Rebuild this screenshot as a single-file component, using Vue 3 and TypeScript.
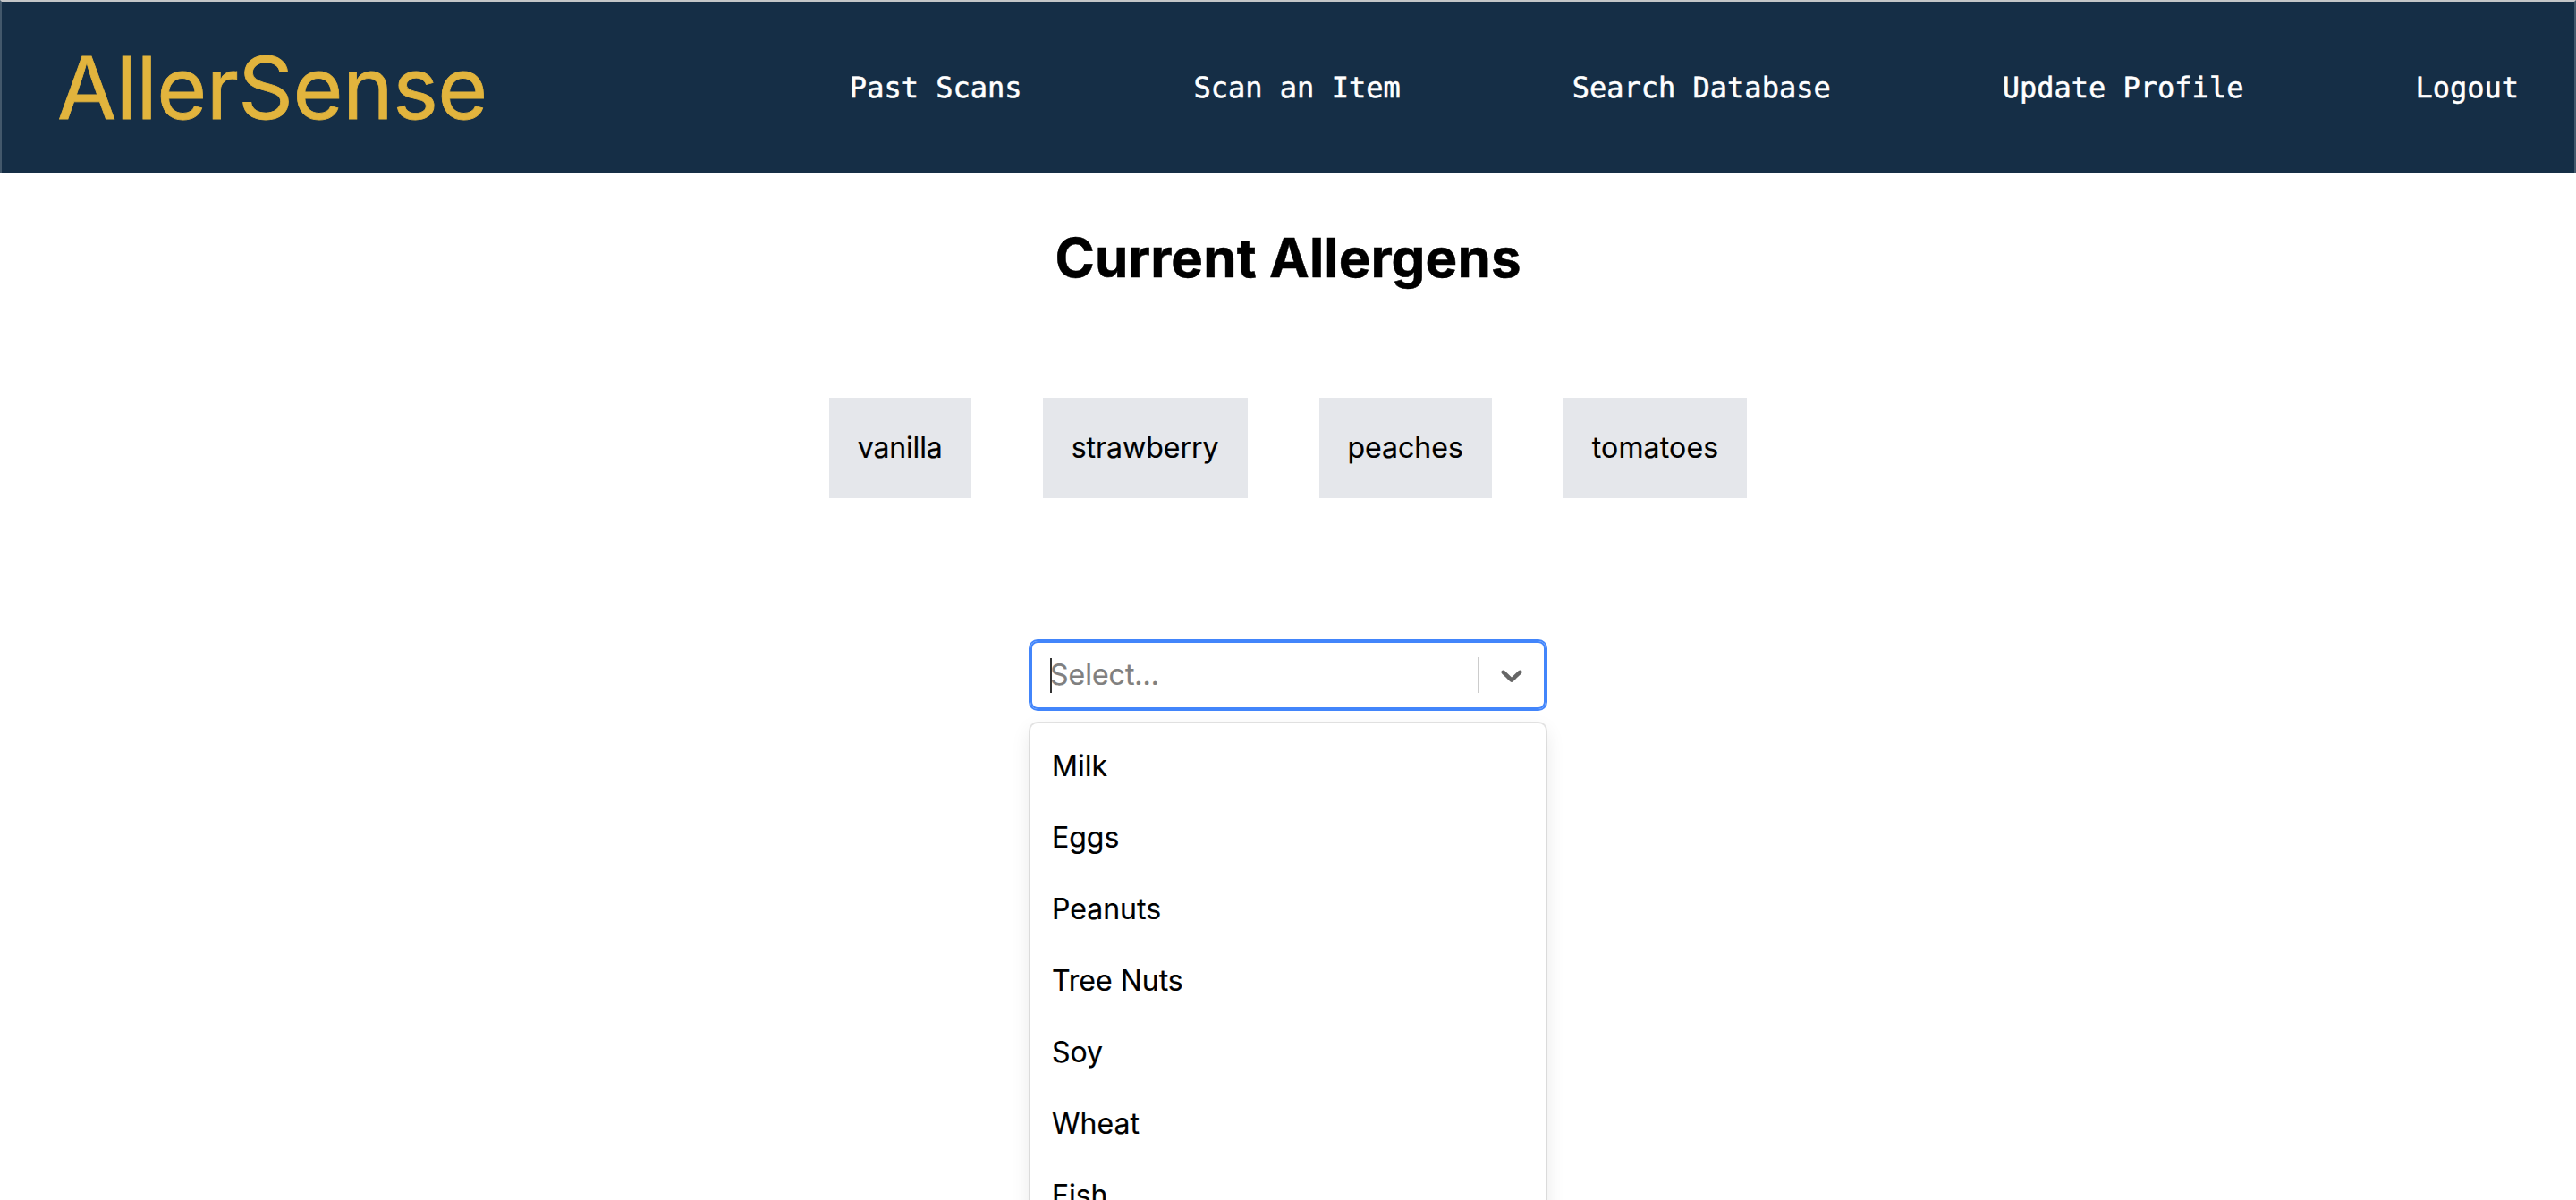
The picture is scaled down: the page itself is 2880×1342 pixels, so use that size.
<script setup lang="ts">
const links: string[] = ['Past Scans', 'Scan an Item', 'Search Database', 'Update Profile', 'Logout']
const allergens: string[] = ['vanilla', 'strawberry', 'peaches', 'tomatoes']
const options: string[] = ['Milk', 'Eggs', 'Peanuts', 'Tree Nuts', 'Soy', 'Wheat', 'Fish']
</script>

<template>
  <div class="page">
    <header class="navbar">
      <div class="brand">AllerSense</div>
      <nav class="links">
        <a v-for="link in links" :key="link">{{ link }}</a>
      </nav>
    </header>
    <main class="content">
      <h1 class="title">Current Allergens</h1>
      <div class="chips">
        <div v-for="item in allergens" :key="item" class="chip">{{ item }}</div>
      </div>
      <div class="select">
        <div class="control">
          <div class="value">
            <span class="placeholder">Select...</span>
            <span class="caret"></span>
          </div>
          <span class="separator"></span>
          <div class="indicator">
            <svg width="40" height="40" viewBox="0 0 20 20" aria-hidden="true">
              <path
                d="M4.516 7.548c0.436-0.446 1.043-0.481 1.576 0l3.908 3.747 3.908-3.747c0.533-0.481 1.141-0.446 1.574 0 0.436 0.445 0.408 1.197 0 1.615-0.406 0.418-4.695 4.502-4.695 4.502-0.217 0.223-0.502 0.335-0.787 0.335s-0.57-0.112-0.789-0.335c0 0-4.287-4.084-4.695-4.502s-0.436-1.17 0-1.615z"
              />
            </svg>
          </div>
        </div>
        <div class="menu">
          <div v-for="option in options" :key="option" class="option">{{ option }}</div>
        </div>
      </div>
    </main>
  </div>
</template>

<style>
body {
  margin: 0;
  background: #fff;
}
</style>

<style scoped>
.page {
  height: 1342px;
  overflow: hidden;
  box-sizing: border-box;
  background: #fff;
  color: #000;
  font-family: Inter, "Liberation Sans", sans-serif;
  font-size: 32px;
  line-height: 48px;
  -webkit-text-stroke: 0.2px currentColor;
}
.navbar {
  display: flex;
  align-items: center;
  justify-content: space-between;
  box-sizing: border-box;
  height: 194px;
  padding: 0 62px;
  border: 2px solid #43586b;
  border-top-color: #c4c6c8;
  border-bottom: 0;
  background: #152e46;
}
.brand {
  color: #e2b43d;
  font-size: 96px;
  line-height: 96px;
  letter-spacing: -0.5px;
  -webkit-text-stroke: 0.8px #e2b43d;
}
.links {
  display: flex;
  gap: 192px;
  color: #fff;
  font-family: "DejaVu Sans Mono", "Liberation Mono", monospace;
  white-space: pre;
  text-rendering: geometricPrecision;
  -webkit-text-stroke: 0.5px #fff;
}
.content {
  display: flex;
  flex-direction: column;
  align-items: center;
}
.title {
  margin: 58px 0 0;
  font-size: 60px;
  line-height: 72px;
  font-weight: 700;
  letter-spacing: 0.1px;
  -webkit-text-stroke: 0.5px #000;
}
.chips {
  display: flex;
  gap: 80px;
  margin-top: 121px;
}
.chip {
  padding: 32px;
  background: #e5e7eb;
}
.chip:first-child {
  letter-spacing: -0.15px;
}
.chip:last-child {
  letter-spacing: 0.15px;
}
.select {
  width: 576px;
  margin-top: 160px;
}
.control {
  display: flex;
  align-items: stretch;
  box-sizing: border-box;
  height: 76px;
  border: 2px solid #4285fb;
  border-radius: 8px;
  box-shadow: 0 0 0 2px #4285fb;
}
.value {
  position: relative;
  display: flex;
  flex: 1;
  align-items: center;
  padding-left: 20px;
}
.placeholder {
  color: #808080;
}
.caret {
  position: absolute;
  left: 20px;
  top: 17px;
  width: 2px;
  height: 39px;
  background: #333;
}
.separator {
  width: 2px;
  margin: 16px 0;
  background: #ccc;
}
.indicator {
  display: flex;
  padding: 16px;
}
.indicator svg {
  fill: #666;
}
.menu {
  height: 600px;
  box-sizing: border-box;
  margin-top: 16px;
  padding: 8px 0;
  border-radius: 8px;
  background: #fff;
  box-shadow: 0 0 0 2px rgba(0, 0, 0, 0.1), 0 8px 22px rgba(0, 0, 0, 0.1);
}
.option {
  padding: 16px 24px;
}
</style>
